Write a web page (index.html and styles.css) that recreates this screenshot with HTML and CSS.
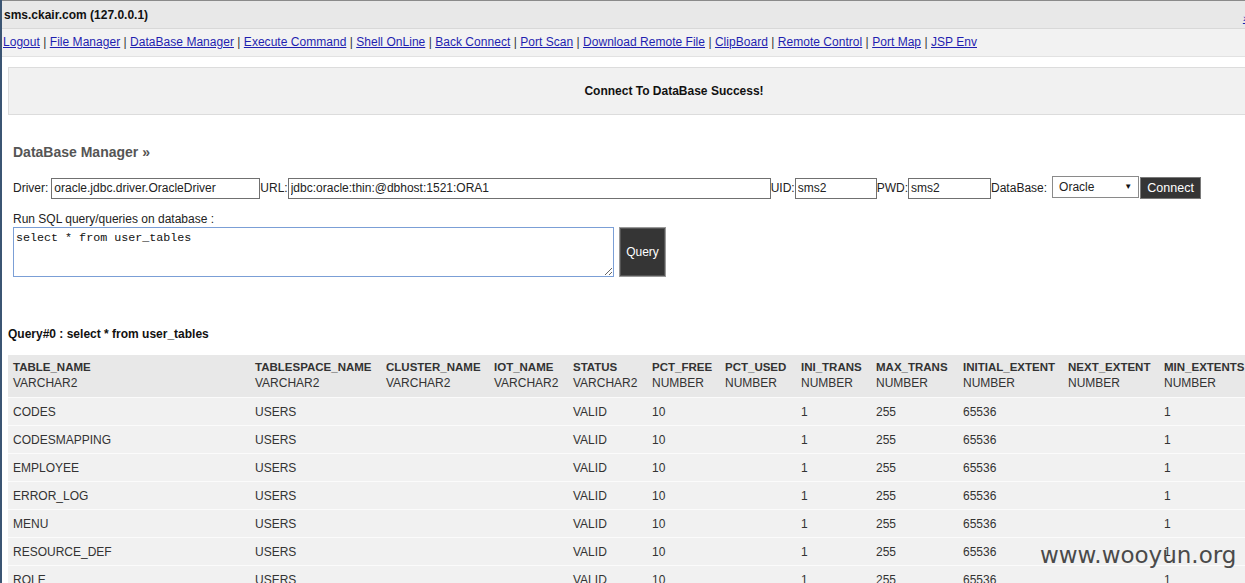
FILE: index.html
```html
<!DOCTYPE html>
<html>
<head>
<meta charset="utf-8">
<title>DataBase Manager</title>
<link rel="stylesheet" href="styles.css">
</head>
<body>
<div class="page">
  <div class="head">
    <span class="title">sms.ckair.com (127.0.0.1)</span>
    <a class="more" href="#">»</a>
  </div>
  <div class="nav">
    <a href="#">Logout</a> | <a href="#">File Manager</a> | <a href="#">DataBase Manager</a> | <a href="#">Execute Command</a> | <a href="#">Shell OnLine</a> | <a href="#">Back Connect</a> | <a href="#">Port Scan</a> | <a href="#">Download Remote File</a> | <a href="#">ClipBoard</a> | <a href="#">Remote Control</a> | <a href="#">Port Map</a> | <a href="#">JSP Env</a>
  </div>
  <div class="main">
    <div class="notice">Connect To DataBase Success!</div>
    <h2 class="section">DataBase Manager »</h2>
    <form class="dbform">
      <div class="row">
        <span class="lbl lbl-gap">Driver:</span><input class="inp w-driver" type="text" value="oracle.jdbc.driver.OracleDriver"><span class="lbl">URL:</span><input class="inp w-url" type="text" value="jdbc:oracle:thin:@dbhost:1521:ORA1"><span class="lbl">UID:</span><input class="inp w-uid" type="text" value="sms2"><span class="lbl">PWD:</span><input class="inp w-pwd" type="text" value="sms2"><span class="lbl lbl-gap">DataBase:</span><span class="sel">Oracle<span class="arrow">▼</span></span><button class="btn btn-connect" type="button">Connect</button>
      </div>
      <div class="sqllabel">Run SQL query/queries on database :</div>
      <div class="sqlrow">
        <textarea class="sql">select * from user_tables</textarea>
        <button class="btn btn-query" type="button">Query</button>
      </div>
    </form>
    <div class="qtitle">Query#0 : select * from user_tables</div>
    <div class="tablewrap">
      <table class="result">
        <colgroup>
          <col class="c1"><col class="c2"><col class="c3"><col class="c4"><col class="c5"><col class="c6"><col class="c7"><col class="c8"><col class="c9"><col class="c10"><col class="c11"><col class="c12">
        </colgroup>
        <thead>
          <tr>
            <th><b>TABLE_NAME</b><br>VARCHAR2</th>
            <th><b>TABLESPACE_NAME</b><br>VARCHAR2</th>
            <th><b>CLUSTER_NAME</b><br>VARCHAR2</th>
            <th><b>IOT_NAME</b><br>VARCHAR2</th>
            <th><b>STATUS</b><br>VARCHAR2</th>
            <th><b>PCT_FREE</b><br>NUMBER</th>
            <th><b>PCT_USED</b><br>NUMBER</th>
            <th><b>INI_TRANS</b><br>NUMBER</th>
            <th><b>MAX_TRANS</b><br>NUMBER</th>
            <th><b>INITIAL_EXTENT</b><br>NUMBER</th>
            <th><b>NEXT_EXTENT</b><br>NUMBER</th>
            <th><b>MIN_EXTENTS</b><br>NUMBER</th>
          </tr>
        </thead>
        <tbody>
          <tr><td>CODES</td><td>USERS</td><td></td><td></td><td>VALID</td><td>10</td><td></td><td>1</td><td>255</td><td>65536</td><td></td><td>1</td></tr>
          <tr><td>CODESMAPPING</td><td>USERS</td><td></td><td></td><td>VALID</td><td>10</td><td></td><td>1</td><td>255</td><td>65536</td><td></td><td>1</td></tr>
          <tr><td>EMPLOYEE</td><td>USERS</td><td></td><td></td><td>VALID</td><td>10</td><td></td><td>1</td><td>255</td><td>65536</td><td></td><td>1</td></tr>
          <tr><td>ERROR_LOG</td><td>USERS</td><td></td><td></td><td>VALID</td><td>10</td><td></td><td>1</td><td>255</td><td>65536</td><td></td><td>1</td></tr>
          <tr><td>MENU</td><td>USERS</td><td></td><td></td><td>VALID</td><td>10</td><td></td><td>1</td><td>255</td><td>65536</td><td></td><td>1</td></tr>
          <tr><td>RESOURCE_DEF</td><td>USERS</td><td></td><td></td><td>VALID</td><td>10</td><td></td><td>1</td><td>255</td><td>65536</td><td></td><td>1</td></tr>
          <tr><td>ROLE</td><td>USERS</td><td></td><td></td><td>VALID</td><td>10</td><td></td><td>1</td><td>255</td><td>65536</td><td></td><td>1</td></tr>
        </tbody>
      </table>
    </div>
  </div>
  <div class="watermark">www.wooyun.org</div>
</div>
</body>
</html>
```
FILE: styles.css
```css
html, body {
  margin: 0;
  padding: 0;
  background: #fff;
  overflow: hidden;
}
body {
  font-family: "Liberation Sans", Arial, sans-serif;
  font-size: 12px;
  color: #000;
}
.page {
  position: relative;
  width: 1245px;
  height: 583px;
  overflow: hidden;
  border-left: 2px solid #3b5573;
  box-sizing: border-box;
}
.head {
  height: 27px;
  border-top: 1px solid #8a8a8a;
  border-bottom: 1px solid #d8d8d8;
  background: #e8e8e8;
  display: flex;
  align-items: center;
  justify-content: space-between;
  padding-left: 2px;
}
.title {
  font-weight: bold;
  font-size: 12px;
  color: #111;
}
.more {
  color: #1f1fb0;
  font-size: 11px;
  margin-right: -4px;
  margin-top: 6px;
}
.nav {
  height: 27px;
  line-height: 27px;
  background: #f2f2f2;
  padding-left: 1px;
  color: #333;
  border-bottom: 1px solid #e2e2e2;
  white-space: nowrap;
  letter-spacing: 0.03px;
}
.nav a {
  color: #1f1fb0;
  text-decoration: underline;
}
.main {
  padding: 10px 0 0 6px;
}
.notice {
  width: 1330px;
  height: 46px;
  line-height: 46px;
  background: #f1f1f1;
  border: 1px solid #dcdcdc;
  text-align: center;
  font-weight: bold;
  font-size: 12px;
  color: #111;
}
.section {
  margin: 28px 0 0 5px;
  font-size: 14px;
  font-weight: bold;
  color: #555;
  height: 18px;
  line-height: 18px;
}
.dbform {
  margin: 16px 0 0 5px;
}
.row {
  display: flex;
  align-items: center;
  height: 22px;
  color: #222;
  white-space: nowrap;
}
.lbl-gap {
  margin-right: 3px;
}
.inp {
  height: 21px;
  box-sizing: border-box;
  border: 1px solid #707070;
  padding: 1px 2px;
  font-family: "Liberation Sans", Arial, sans-serif;
  font-size: 12px;
  color: #222;
  margin: 0;
  background: #fff;
}
.w-driver { width: 209px; }
.w-url { width: 483px; }
.w-uid { width: 82px; }
.w-pwd { width: 83px; }
.sel {
  position: relative;
  display: inline-block;
  width: 87px;
  height: 22px;
  line-height: 20px;
  box-sizing: border-box;
  border: 1px solid #8a8a8a;
  padding-left: 6px;
  background: #fff;
  color: #222;
  margin-top: -2px;
  margin-left: 2px;
}
.arrow {
  position: absolute;
  right: 6px;
  top: 0;
  font-size: 8px;
  color: #111;
}
.btn {
  background: #353535;
  color: #fff;
  font-family: "Liberation Sans", Arial, sans-serif;
  font-size: 12px;
  border: 1px solid #8a8a8a;
  margin: 0;
  padding: 0;
}
.btn-connect {
  width: 61px;
  height: 22px;
  margin-left: 1px;
  font-size: 12.5px;
  border-color: #7a7a7a;
}
.sqllabel {
  margin-top: 13px;
  height: 15px;
  line-height: 15px;
  color: #222;
}
.sqlrow {
  display: flex;
  align-items: flex-start;
  margin-top: 0;
}
.sql {
  width: 601px;
  height: 50px;
  box-sizing: border-box;
  border: 1px solid #7b9fd6;
  font-family: "Liberation Mono", "Courier New", monospace;
  font-size: 11.7px;
  padding: 3px 2px;
  margin: 0;
  color: #111;
  resize: both;
}
.btn-query {
  width: 47px;
  height: 50px;
  margin-left: 5px;
  border: 1px solid #999;
  box-shadow: inset 0 0 0 1px #555;
}
.qtitle {
  margin-top: 50px;
  font-weight: bold;
  font-size: 12px;
  height: 15px;
  line-height: 15px;
  color: #111;
}
.tablewrap {
  margin-top: 13px;
  overflow: hidden;
}
.result {
  border-collapse: collapse;
  table-layout: fixed;
  width: 1279px;
  color: #333;
  font-size: 12px;
}
.c1 { width: 242px; }
.c2 { width: 131px; }
.c3 { width: 108px; }
.c4 { width: 79px; }
.c5 { width: 79px; }
.c6 { width: 73px; }
.c7 { width: 76px; }
.c8 { width: 75px; }
.c9 { width: 87px; }
.c10 { width: 105px; }
.c11 { width: 96px; }
.c12 { width: 128px; }
.result th {
  background: #e8e8e8;
  text-align: left;
  font-weight: normal;
  padding: 4px 5px 6px;
  line-height: 16px;
  height: 32px;
  vertical-align: top;
  white-space: nowrap;
}
.result th b {
  font-weight: bold;
  font-size: 11.5px;
  color: #333;
}
.result td {
  background: #f1f1f1;
  height: 27px;
  padding: 0 5px;
  border-top: 1px solid #fbfbfb;
  white-space: nowrap;
  vertical-align: middle;
}
.watermark {
  position: absolute;
  left: 1038px;
  top: 542px;
  font-family: "DejaVu Sans", sans-serif;
  font-size: 23px;
  color: #4a4a4a;
}
```
